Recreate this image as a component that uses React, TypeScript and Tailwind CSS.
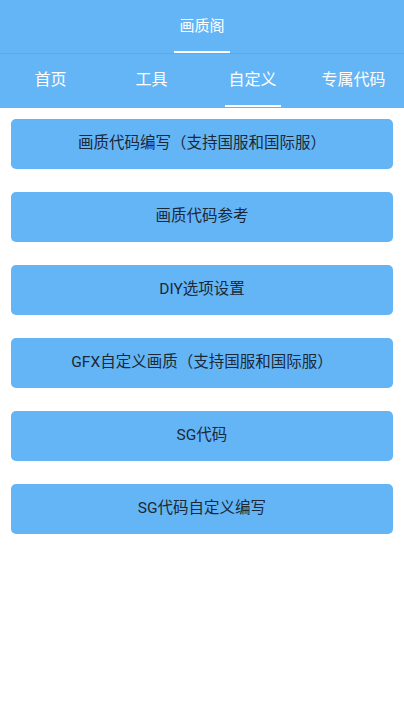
import React from 'react';

const tabs = ['首页', '工具', '自定义', '专属代码'];

const items = [
  '画质代码编写（支持国服和国际服）',
  '画质代码参考',
  'DIY选项设置',
  'GFX自定义画质（支持国服和国际服）',
  'SG代码',
  'SG代码自定义编写',
];

export default function App() {
  return (
    <div
      className="min-h-[718px] w-full bg-white"
      style={{ fontFamily: 'Roboto, "Noto Sans CJK SC", sans-serif' }}
    >
      {/* Title bar */}
      <div className="h-[54px] bg-[#64b5f6] border-b border-[#5aa9e8] flex flex-col items-center">
        <div className="flex-1 flex items-center pt-[2px] text-white text-[15px]">画质阁</div>
        <div className="w-[56px] h-[2px] bg-white" />
      </div>

      {/* Tabs */}
      <div className="h-[54px] bg-[#64b5f6] grid grid-cols-4">
        {tabs.map((t, i) => (
          <div key={t} className="flex flex-col items-center">
            <div className="flex-1 flex items-center text-white text-[16px]">{t}</div>
            <div className={`w-[56px] h-[2px] mb-[1px] ${i === 2 ? 'bg-white' : ''}`} />
          </div>
        ))}
      </div>

      {/* Buttons */}
      <div className="px-[11px] pt-[11px] flex flex-col gap-[23px]">
        {items.map((label) => (
          <button
            key={label}
            className="h-[50px] w-full rounded-[5px] bg-[#64b5f6] text-[#1b2836] text-[15.5px] flex items-center justify-center"
          >
            {label}
          </button>
        ))}
      </div>
    </div>
  );
}
